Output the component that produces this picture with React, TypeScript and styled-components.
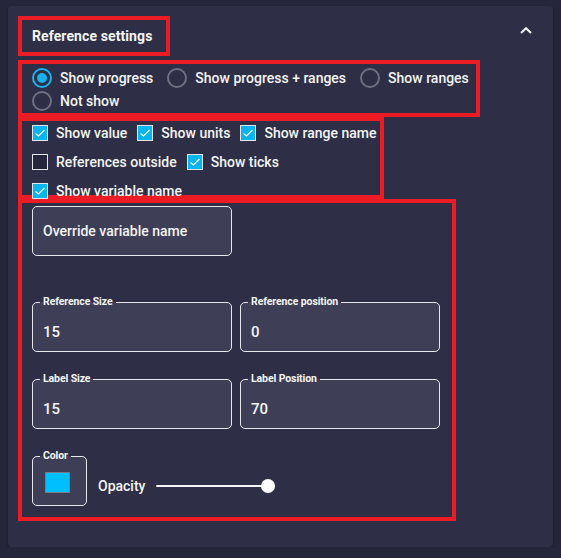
import React, { useState } from 'react';
import styled, { createGlobalStyle } from 'styled-components';

const GlobalStyle = createGlobalStyle`
  html, body {
    margin: 0;
    background: #25263b;
  }
  body {
    font-family: Roboto, 'Liberation Sans', sans-serif;
    color: #f4f4f6;
  }
`;

const Panel = styled.section`
  margin: 6px 0 0 8px;
  width: 545px;
  box-sizing: border-box;
  padding: 10px 10px 26px;
  background: #2e2f46;
  border-radius: 4px;
  box-shadow: 0 2px 3px rgba(0, 0, 0, 0.35);
`;

const HeaderRow = styled.div`
  display: flex;
  justify-content: space-between;
  align-items: flex-start;
  margin-bottom: 4px;
`;

// red annotation frames drawn over the groups
const Frame = styled.div<{ $w: number; $h?: number }>`
  box-sizing: border-box;
  width: ${(p) => p.$w}px;
  height: ${(p) => (p.$h ? `${p.$h}px` : 'auto')};
  border: 4px solid #ec1c24;
`;

const TitleFrame = styled(Frame)`
  display: flex;
  align-items: center;
  padding: 0 8px 0 10px;
`;

const Title = styled.h3`
  margin: 0;
  font-size: 14px;
  font-weight: 700;
  letter-spacing: 0.1px;
`;

const Toggle = styled.button`
  margin: 11px 11px 0 0;
  padding: 0;
  border: 0;
  background: none;
  display: flex;
  cursor: pointer;
`;

const RadioFrame = styled(Frame)`
  display: flex;
  flex-wrap: wrap;
  column-gap: 14px;
  padding: 3px 6px 0 10px;
`;

const RadioItem = styled.label`
  display: flex;
  align-items: center;
  gap: 8px;
  height: 22px;
  font-size: 14px;
  font-weight: 500;
  cursor: pointer;
`;

const RadioDot = styled.span<{ $checked: boolean }>`
  box-sizing: border-box;
  width: 20px;
  height: 20px;
  border-radius: 50%;
  border: 2px solid ${(p) => (p.$checked ? '#17b3ee' : '#6e6f80')};
  display: flex;
  align-items: center;
  justify-content: center;

  &::after {
    content: '';
    width: 10px;
    height: 10px;
    border-radius: 50%;
    background: ${(p) => (p.$checked ? '#17b3ee' : 'transparent')};
  }
`;

const CheckFrame = styled(Frame)`
  display: flex;
  flex-direction: column;
  gap: 13px;
  padding: 4px 0 0 10px;
`;

const CheckRow = styled.div`
  display: flex;
  gap: 10px;
`;

const CheckItem = styled.label`
  display: flex;
  align-items: center;
  gap: 8px;
  height: 16px;
  font-size: 14px;
  font-weight: 500;
  cursor: pointer;
`;

const CheckBox = styled.span<{ $checked: boolean }>`
  box-sizing: border-box;
  width: 16px;
  height: 16px;
  border: 1px solid #e4e4ea;
  background: ${(p) => (p.$checked ? '#05b5f0' : '#25263a')};
  display: flex;
  align-items: center;
  justify-content: center;
`;

const FieldsFrame = styled(Frame)`
  padding: 3px 10px 11px;
`;

const TextBox = styled.div`
  box-sizing: border-box;
  width: 200px;
  height: 50px;
  display: flex;
  align-items: center;
  padding: 0 10px;
  border: 1px solid #e6e6ec;
  border-radius: 5px;
  background: #3e3f56;
  font-size: 14px;
  font-weight: 500;
`;

const FieldGrid = styled.div`
  display: grid;
  grid-template-columns: 200px 200px;
  column-gap: 8px;
  row-gap: 21px;
  margin-top: 40px;
`;

const Field = styled.fieldset<{ $w?: number }>`
  box-sizing: border-box;
  margin: 0;
  min-width: 0;
  width: ${(p) => (p.$w ? `${p.$w}px` : 'auto')};
  height: 56px;
  padding: 0 8px 9px;
  border: 1px solid #e6e6ec;
  border-radius: 5px;
  background: #3e3f56;
`;

const Legend = styled.legend`
  padding: 0 3px;
  margin-left: -1px;
  font-size: 10.5px;
  line-height: 12px;
  font-weight: 700;
  letter-spacing: -0.1px;
`;

const Value = styled.div`
  margin: 14px 0 0 2px;
  font-size: 15px;
  line-height: 20px;
  font-weight: 500;
`;

const ColorRow = styled.div`
  display: flex;
  align-items: center;
  margin-top: 21px;
`;

const Swatch = styled.div<{ $color: string }>`
  box-sizing: border-box;
  width: 25px;
  height: 21px;
  margin: 10px 0 0 4px;
  background: ${(p) => p.$color};
  border: 1px solid #7a7b88;
`;

const OpacityGroup = styled.div`
  display: flex;
  align-items: center;
  gap: 11px;
  margin-left: 11px;
  padding-top: 16px;
`;

const OpacityLabel = styled.span`
  font-size: 14px;
  font-weight: 500;
`;

const Track = styled.div`
  position: relative;
  width: 119px;
  height: 2px;
  background: #f4f4f6;
  border-radius: 1px;
`;

const Thumb = styled.span`
  position: absolute;
  top: 50%;
  width: 14px;
  height: 14px;
  border-radius: 50%;
  background: #ffffff;
  transform: translate(-50%, -50%);
`;

const radios = ['Show progress', 'Show progress + ranges', 'Show ranges', 'Not show'];

const checkRows = [
  [
    { label: 'Show value', on: true },
    { label: 'Show units', on: true },
    { label: 'Show range name', on: true },
  ],
  [
    { label: 'References outside', on: false },
    { label: 'Show ticks', on: true },
  ],
  [{ label: 'Show variable name', on: true }],
];

const fields = [
  { label: 'Reference Size', value: '15' },
  { label: 'Reference position', value: '0' },
  { label: 'Label Size', value: '15' },
  { label: 'Label Position', value: '70' },
];

function App() {
  const [mode, setMode] = useState('Show progress');
  const opacity = 1;

  return (
    <>
      <GlobalStyle />
      <Panel>
        <HeaderRow>
          <TitleFrame $w={152} $h={40}>
            <Title>Reference settings</Title>
          </TitleFrame>
          <Toggle aria-label="collapse">
            <svg width="12" height="7" viewBox="0 0 12 7">
              <polyline points="1,6 6,1.2 11,6" fill="none" stroke="#f4f4f6" strokeWidth="2" />
            </svg>
          </Toggle>
        </HeaderRow>

        <RadioFrame $w={462} $h={57}>
          {radios.map((r) => (
            <RadioItem key={r} onClick={() => setMode(r)}>
              <RadioDot $checked={mode === r} />
              {r}
            </RadioItem>
          ))}
        </RadioFrame>

        <CheckFrame $w={366} $h={82}>
          {checkRows.map((row, i) => (
            <CheckRow key={i}>
              {row.map((c) => (
                <CheckItem key={c.label}>
                  <CheckBox $checked={c.on}>
                    {c.on && (
                      <svg width="12" height="10" viewBox="0 0 12 10">
                        <polyline points="1.5,5.5 4.5,8 10.5,2" fill="none" stroke="#fff" strokeWidth="1.2" />
                      </svg>
                    )}
                  </CheckBox>
                  {c.label}
                </CheckItem>
              ))}
            </CheckRow>
          ))}
        </CheckFrame>

        <FieldsFrame $w={438}>
          <TextBox>Override variable name</TextBox>
          <FieldGrid>
            {fields.map((f) => (
              <Field key={f.label}>
                <Legend>{f.label}</Legend>
                <Value>{f.value}</Value>
              </Field>
            ))}
          </FieldGrid>
          <ColorRow>
            <Field $w={55}>
              <Legend>Color</Legend>
              <Swatch $color="#00bfff" />
            </Field>
            <OpacityGroup>
              <OpacityLabel>Opacity</OpacityLabel>
              <Track>
                <Thumb style={{ left: `${opacity * 112}px` }} />
              </Track>
            </OpacityGroup>
          </ColorRow>
        </FieldsFrame>
      </Panel>
    </>
  );
}

export default App;
